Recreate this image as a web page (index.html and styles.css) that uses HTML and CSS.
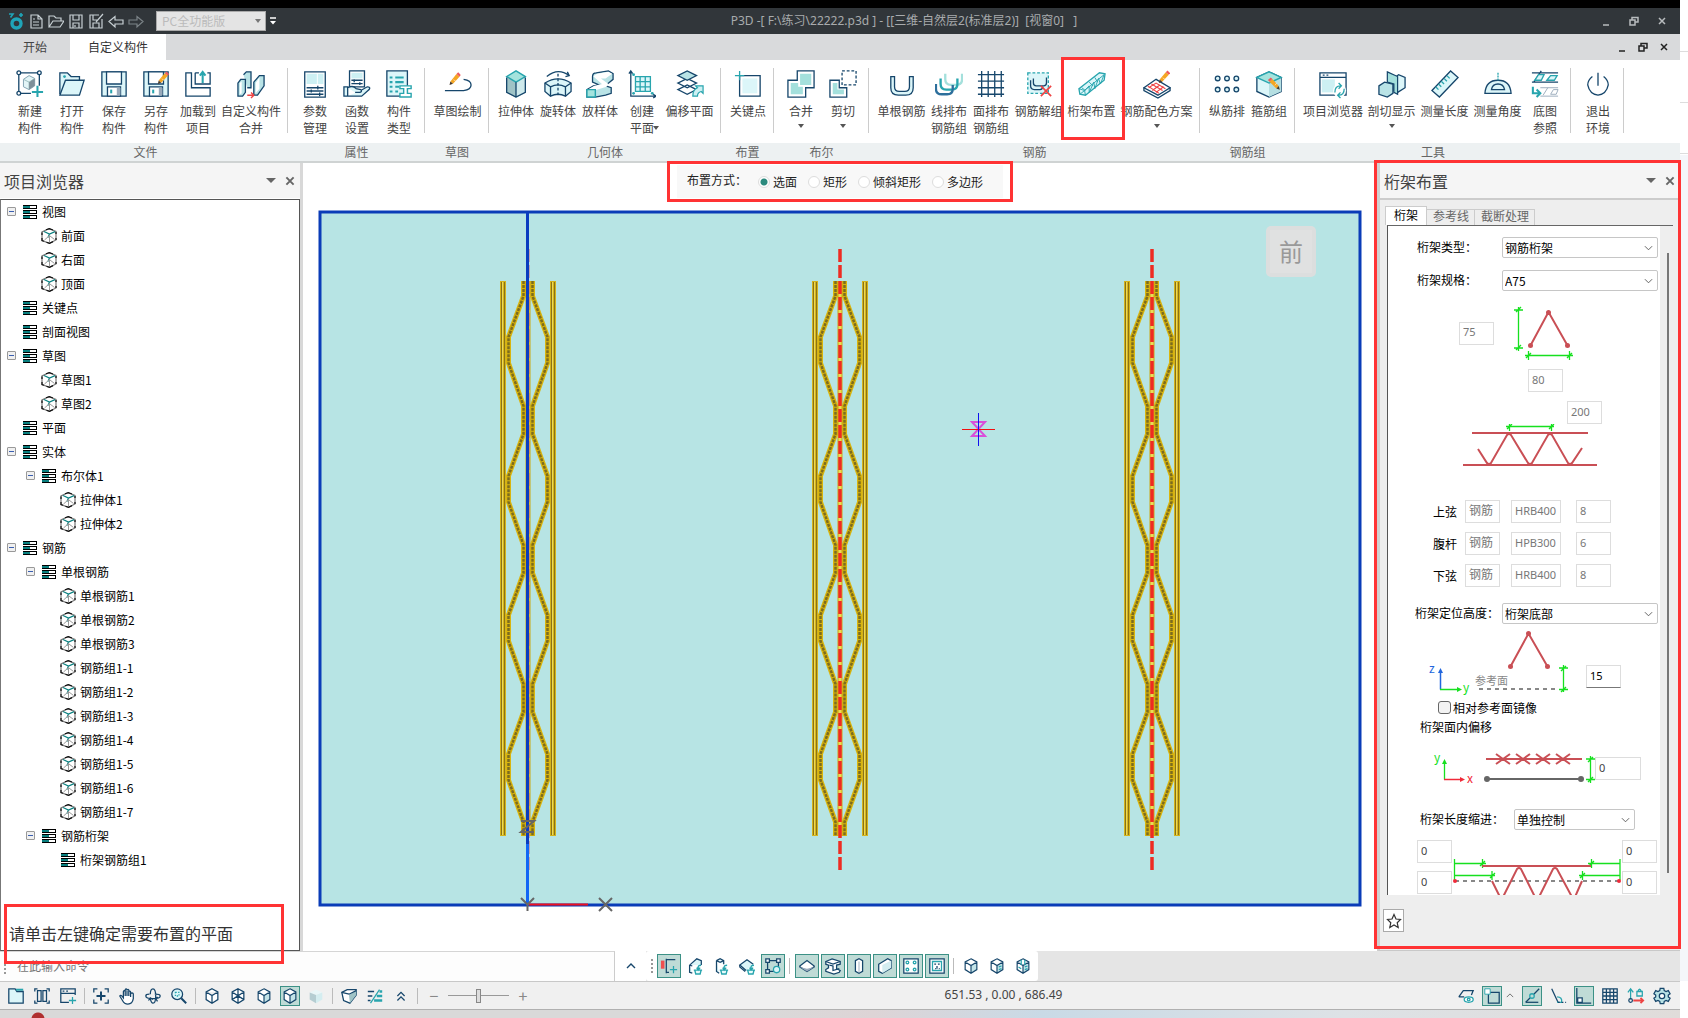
FILE: index.html
```html
<!DOCTYPE html>
<html lang="zh-CN">
<head>
<meta charset="utf-8">
<title>P3D</title>
<link rel="stylesheet" href="styles.css">
</head>
<body>
<svg class="defs" aria-hidden="true">
  <symbol id="list" viewBox="0 0 16 16"><path d="M1 1h14v4H1zM1 6h14v4H1zM1 11h14v4H1z" fill="#000"/><path d="M8 2h6v2H8zM8 7h6v2H8zM8 12h6v2H8z" fill="#fff"/><path d="M1 2h7v2H1zM1 7h7v2H1zM1 12h7v2H1z" fill="#0b8080"/></symbol>
  <symbol id="solid" viewBox="0 0 16 16"><path d="M8 .7 15 3.500V12L8.500 15.300 1 12.500V4z" fill="#fff" stroke="#777" stroke-width="1.200"/><path d="M5 1.800 8.500.7 12 2M1 4.500V7M15 4v2M15 10v2M5.500 14.200 8.500 15.300 12 13.600M1 10v2.500L3 13.200" fill="none" stroke="#111" stroke-width="1.200"/><path d="M3 3.500 8.500 6 14 3.600M8.500 6 7 9.500" fill="none" stroke="#0b8080" stroke-width="1.200"/><path d="M8.500 7v7M8 8 3.500 12M9 8l4.500 3.500" fill="none" stroke="#999"/></symbol>
  <symbol id="box" viewBox="0 0 20 20"><path d="M10 2 16.500 5.500V14L10 18 3.500 14V5.500z" fill="#fff"/><path d="M10 9.500V18l6.500-4V5.500z" fill="#c4e4e8"/><path d="M10 2 16.500 5.500V14L10 18 3.500 14V5.500zM3.500 5.500 10 9.500l6.500-4M10 9.500V18" fill="none" stroke="#16466b" stroke-width="1.300"/></symbol>
  <symbol id="pencil" viewBox="0 0 14 16"><path d="M2 11 9 2.500 12.500 5.500 5 13.500z" fill="#f5a623"/><path d="M9 2.500 11 .5 14 3.500 12.500 5.500z" fill="#ee5a5a"/><path d="M2 11 1 15 5 13.500z" fill="#4a3a2a"/><path d="M5.500 9 8.500 11" stroke="#fff" stroke-width=".6"/></symbol>
  <symbol id="bucket" viewBox="0 0 10 12"><path d="M2 7h6.500l-1 4H3zM1 7h8.500M5.500 7V4Q5.500 2 8.500 2M4 4.500 5.500 7 7.500 4.500" fill="#e8fbfb" stroke="#28a5ae" stroke-width="1.400"/></symbol>
</svg>

<div class="shell">
<div class="app">
  <header class="titlebar">
    <nav class="quick">
      <button aria-label="P3D"><svg viewBox="0 0 16 18"><circle cx="8.500" cy="11.500" r="4.500" fill="none" stroke="#1fa5b8" stroke-width="3.400"/><path d="M1 2h4L2.500 5.500M11 3h4M13 1v4" stroke="#1fa5b8" stroke-width="1.600" fill="none"/></svg></button>
      <button aria-label="新建"><svg viewBox="0 0 16 18"><path d="M3 3h7l4 4v9H3zM10 3v4h4M5 10h6M5 13h6M5 7h2" class="q"/></svg></button>
      <button aria-label="打开"><svg viewBox="0 0 16 18"><path d="M1 15V4h5l2 2h5v3M1 15l4-6h11l-4 6z" class="q"/></svg></button>
      <button aria-label="保存"><svg viewBox="0 0 16 18"><path d="M2 3h12v13H2zM5 3v5h6V3M5 16v-5h6v5M7 13v2" class="q"/></svg></button>
      <button aria-label="另存"><svg viewBox="0 0 16 18"><path d="M11 3H2v13h12V7M5 3v5h4M5 16v-5h6v5M15 2 8 10" class="q"/></svg></button>
      <button aria-label="撤销"><svg viewBox="0 0 16 18"><path d="M1 9.500 7 4.500V8h8v4H7v3z" class="q"/></svg></button>
      <button aria-label="重做"><svg viewBox="0 0 16 18"><path d="M15 9.500 9 4.500V8H1v4h8v3z" class="q dim"/></svg></button>
    </nav>
    <div class="pick edition"><select aria-label="版本"><option>PC全功能版</option></select><svg viewBox="0 0 6 4"><path d="M0 0h6L3 4z" fill="#777"/></svg></div>
    <button class="more" aria-label="更多"><svg viewBox="0 0 8 8"><path d="M1 1h6" stroke="#fff" stroke-width="1.500"/><path d="M1 4h6L4 7.500z" fill="#fff"/></svg></button>
    <h1>P3D -[ F:\练习\22222.p3d ] - [[三维-自然层2(标准层2)]  [视窗0]   ]</h1>
    <div class="wins light"><button aria-label="最小化"><svg viewBox="0 0 10 10"><path d="M2 9h6" /></svg></button><button aria-label="还原"><svg viewBox="0 0 10 10"><path d="M1 4h5v5H1zM3 4V1.500h6V6H6" /></svg></button><button aria-label="关闭"><svg viewBox="0 0 10 10"><path d="M2 2l6 6M8 2 2 8" /></svg></button></div>
  </header>

  <div class="tabs">
    <button class="tab home">开始</button><button class="tab on">自定义构件</button>
    <div class="wins dark"><button aria-label="最小化视窗"><svg viewBox="0 0 10 10"><path d="M2 9h6" /></svg></button><button aria-label="还原视窗"><svg viewBox="0 0 10 10"><path d="M1 4h5v5H1zM3 4V1.500h6V6H6" /></svg></button><button aria-label="关闭视窗"><svg viewBox="0 0 10 10"><path d="M2 2l6 6M8 2 2 8" /></svg></button></div>
  </div>

  <div class="ribbon">
    <section class="group"><div class="tools">
      <button><svg viewBox="0 0 30 30"><path d="M8 10 14 6l6 3v8l-6 4-6-3z" fill="#e3f5f7" stroke="#7d9fae"/><path d="M8 10l6 3 6-4M14 13v8" fill="none" stroke="#9bb"/><path d="M14 13l6-4v8l-6 4z" fill="#7d8f99"/><path d="M5 3h18M3 5v18M25 5v12M5 25h11" class="n"/><g class="n w"><circle cx="3" cy="3" r="2"/><circle cx="25" cy="3" r="2"/><circle cx="3" cy="25" r="2"/></g><path d="M23 17v12M17 23.500h12" class="t b"/></svg>新建<br>构件</button>
      <button><svg viewBox="0 0 30 30"><path d="M2 26V3h8l4 4h9v5" class="n l"/><path d="M2 27 8 11h20l-5 16z" class="n l"/><circle cx="7" cy="7" r="1.500" fill="#28a5ae"/></svg>打开<br>构件</button>
      <button><svg viewBox="0 0 30 30"><path d="M2 2h26v26H2z" class="n l"/><path d="M7 2h16v13H7z" class="n w"/><path d="M8 28V18h14v10z" class="n w"/><path d="M18 19h4v8h-4z" fill="#9ab"/><path d="M12 21v4" class="t b"/></svg>保存<br>构件</button>
      <button><svg viewBox="0 0 30 30"><path d="M2 2h26v26H2z" class="n l"/><path d="M7 2h16v13H7z" class="n w"/><path d="M8 28V18h14v10z" class="n w"/><path d="M18 19h4v8h-4z" fill="#9ab"/><path d="M12 21v4" class="t b"/><use href="#pencil" x="16" y="1" width="13" height="15"/></svg>另存<br>构件</button>
      <button><svg viewBox="0 0 30 30"><path d="M2 3h6v16h20v9H2zM12 3h4M12 3v12h16V3h-3" class="n w"/><path d="M20 14V4M17 6l3-4 3 4" class="t b"/></svg>加载到<br>项目</button>
      <button class="w64"><svg viewBox="0 0 30 30"><path d="M7 5l3-3h5v17h-4M1 14l3-4h5v14l-3 4H1zM18 13l6-7h5v11l-7 10h-4z" class="n m"/><path d="M3 14l2-2v13l-2 1zM20 14l4-6v12l-4 5z" fill="#fff"/><path d="M11 27h7M15 24l3 3-3 3" stroke="#ee4444" fill="none" stroke-width="1.500"/></svg>自定义构件<br>合并</button>
    </div><h2>文件</h2></section>

    <section class="group"><div class="tools">
      <button><svg viewBox="0 0 30 30"><path d="M4 2h22v27H4z" class="n w"/><path d="M6 4h11v11H6zM18 4h6v11h-6z" fill="#cdf0f3"/><path d="M6 19h18M6 22.500h18M6 26h18M18 17v4M11 21v3M20 24v4" class="n"/></svg>参数<br>管理</button>
      <button><svg viewBox="0 0 30 30"><path d="M7 1h16v17H7z" class="n w"/><path d="M9 3h12v6H9z" fill="#cdf0f3"/><path d="M9 11h12M9 14.500h12M12 10v3M18 13v3" class="n"/><path d="M1 18h4v10H1zM5 19q6-3 9 1l5 1q2 2-1 3h-5M19 22l7-4q4 0 2 3l-8 7H5" class="n l"/></svg>函数<br>设置</button>
      <button><svg viewBox="0 0 30 30"><path d="M2 1h22v27H2z" class="n l"/><path d="M5 8h3M11 8h9M5 13h3M11 13h9M5 18h3M11 18h4M5 23h3M11 23h3" class="t b"/><path d="M16 17h12v3h-4v5h4v4H16v-4h4v-5h-4z" fill="#fff" stroke="#28a5ae" stroke-width="1.500"/></svg>构件<br>类型</button>
    </div><h2>属性</h2></section>

    <section class="group"><div class="tools">
      <button class="w53"><svg viewBox="0 0 30 30"><use href="#pencil" x="5" y="2" width="13" height="15"/><path d="M1 22h20q8-1 8-6 0-5-8-6" class="n"/></svg>草图绘制</button>
    </div><h2>草图</h2></section>

    <section class="group"><div class="tools">
      <button><svg viewBox="0 0 30 30"><path d="M5 7 15 1l10 6v17l-10 6-10-6z" fill="#9fc3c6"/><path d="M15 13 25 7v17l-10 6z" fill="#cfeaec"/><path d="M5 7 15 1l10 6-10 6z" fill="#a4e3dd" stroke="#28a5ae" stroke-width="1.500"/><path d="M5 8v16l10 5 10-5V8M15 13v16" class="n"/></svg>拉伸体</button>
      <button><svg viewBox="0 0 30 30"><path d="M3 7Q15-3 27 6M25 2l2 4-4 1" class="n"/><path d="M1 14q14-9 28 0v9l-6 5q-8-4-16 0l-6-5z" class="n l"/><path d="M1 14l6 4q8-4 16 0l6-4M7 18v10M23 18v10" class="n"/><path d="M15 4v24" class="n" stroke-dasharray="3 2"/></svg>旋转体</button>
      <button><svg viewBox="0 0 30 30"><path d="M7 7Q7 3 11 3L24 1l5 3v6l-6 5-5 1 9 3v6l-6 2-11 2H1v-8l7-4 6-1-7-3z" class="n m"/><path d="M8 7q1-2 4-3l12-2 4 2-7 5h-5l8 6-2 3-13 4-7-1 7-4 8-2z" fill="#fff"/><path d="M1 21h9v8H1z" fill="#a4e3dd" stroke="#28a5ae" stroke-width="1.500"/></svg>放样体</button>
      <button><svg viewBox="0 0 30 30"><path d="M8 7h16v16H8z" fill="#dcf6f9"/><path d="M8 7h16v16H8zM13 7v16M18.500 7v16M8 12.500h16M8 18h16" class="t"/><path d="M3 1v27h27M1 4l2-3 2 3M27 26l3 2-3 2" class="n"/><g fill="#28a5ae"><circle cx="6" cy="5" r="1.500"/><circle cx="6" cy="25" r="1.500"/><circle cx="26" cy="25" r="1.500"/></g></svg>创建<br>平面<i class="caret beside"></i></button>
      <button class="w53"><svg viewBox="0 0 30 30"><path d="M2 21l10-5 10 5-10 5zM2 14l10-5 10 5-10 5z" class="n w"/><path d="M2 6 12 1l10 5-10 5z" class="n m"/><path d="M18 28q0-7 5-9l-2-2h8v8l-2-2q-4 1-4 5z" fill="#cdf0f3" stroke="#28a5ae" stroke-width="1.300"/></svg>偏移平面</button>
    </div><h2>几何体</h2></section>

    <section class="group"><div class="tools">
      <button><svg viewBox="0 0 30 30"><path d="M6 6h22v22H6z" class="n w"/><path d="M9 9h16v16H9z" fill="#dcf6f9"/><path d="M6 1v10M1 6h10" class="t"/></svg>关键点</button>
    </div><h2>布置</h2></section>

    <section class="group"><div class="tools">
      <button><svg viewBox="0 0 30 30"><path d="M11 1h18v18H20v10H1V11h10z" class="n w"/><path d="M14 4h12v12H14zM4 14h8v4h5v8H4z" fill="#a4e0dc"/></svg>合并<i class="caret"></i></button>
      <button><svg viewBox="0 0 30 30"><path d="M14 1h15v15H14z" class="n" stroke-dasharray="3 2"/><path d="M1 11h10v8h8v10H1z" class="n w"/><path d="M4 14h5v7h7v5H4z" fill="#a4e0dc"/></svg>剪切<i class="caret"></i></button>
    </div><h2>布尔</h2></section>

    <section class="group"><div class="tools">
      <button class="w53"><svg viewBox="0 0 30 30"><path d="M3 7h4v11q0 5 5 5h6q5 0 5-5V7h4v12q0 8-8 8h-8q-8 0-8-8z" class="n l"/></svg>单根钢筋</button>
      <button><svg viewBox="0 0 30 30"><g fill="none" stroke-width="2.500"><path d="M11 4v6q0 6 6 6h6q6 0 6-6V4" stroke="#a4e0dc"/><path d="M6 9v6q0 6 6 6h6q6 0 6-6V9" stroke="#28a5ae"/><path d="M1 15v5q0 6 6 6h6q6 0 6-6v-4" stroke="#2d6f9c"/></g></svg>线排布<br>钢筋组</button>
      <button><svg viewBox="0 0 30 30"><path d="M5 1v28M12 1v28M19 1v28M26 1v28M1 5h28M1 12h28M1 19h28M1 26h28" class="n"/></svg>面排布<br>钢筋组</button>
      <button class="w53"><svg viewBox="0 0 30 30"><path d="M3 3h22v22H3z" class="t l" stroke-dasharray="3 2"/><path d="M9 9v5q0 3 3 3h8q3 0 3-3V8M6 11v6q0 4 4 4h6q3 0 3-3" class="n"/><path d="M17 17 28 28M28 17 17 28" stroke="#ee4444" stroke-width="1.800"/></svg>钢筋解组</button>
      <button class="w53"><svg viewBox="0 0 30 30"><path d="M1 20 23 3l6 1-1 7L8 27l-6-1z" class="t l"/><path d="M1 20l6 2 1 5M7 22 28 5M2 26 7 22l5-5 0 7 5-11 1 7 4-11 2 6 4-10M4 19l4 3M12 13l4 4M18 8l3 5" class="t w0"/></svg>桁架布置</button>
      <button class="w76"><svg viewBox="0 0 30 30"><path d="M1 19 14 10l15 9-13 8z" class="n w"/><path d="M1 19v3l15 8 13-8v-3" class="n"/><path d="M6 19l8-5 10 6M10 22l8-6M14 24l8-6M5 17l12 8M9 15l12 7" stroke="#ee4444" fill="none" stroke-width="1.200"/><use href="#pencil" x="16" y="0" width="13" height="15"/></svg>钢筋配色方案<i class="caret"></i></button>
    </div><h2>钢筋</h2></section>

    <section class="group"><div class="tools">
      <button><svg viewBox="0 0 30 30"><g class="n l"><circle cx="5" cy="9" r="2.500"/><circle cx="15" cy="9" r="2.500"/><circle cx="25" cy="9" r="2.500"/><circle cx="5" cy="21" r="2.500"/><circle cx="15" cy="21" r="2.500"/><circle cx="25" cy="21" r="2.500"/></g></svg>纵筋排</button>
      <button><svg viewBox="0 0 30 30"><path d="M2 8 15 2l13 6v15l-13 6-13-6z" class="n l"/><path d="M15 14l13-6v15l-13 6z" fill="#b5dfe2"/><path d="M2 8 15 2l13 6-13 6z" fill="#a4e3dd" stroke="#28a5ae" stroke-width="1.500"/><use href="#pencil" x="14" y="7" width="14" height="15" transform="rotate(-85 21 15)"/></svg>箍筋组</button>
    </div><h2>钢筋组</h2></section>

    <section class="group"><div class="tools">
      <button class="w64"><svg viewBox="0 0 30 30"><path d="M1 3h28v24H1zM1 8h28" class="n w"/><path d="M3 10h14v14H3z" fill="#cdf0f3"/><path d="M4 5.500h2M8 5.500h2" class="n"/><circle cx="22" cy="22" r="7" fill="#fff"/><path d="M17 24q0-7 6-7M27 20q0 7-6 7M21 14l3 3-3 3M23 24l-3 3 3 3" class="t"/></svg>项目浏览器</button>
      <button class="w53"><svg viewBox="0 0 30 30"><path d="M1 17l6-4 9 2v10l-6 4-9-3z" class="n m"/><path d="M17 9l5-4 7 3v11l-8 5-4-2z" class="n l"/><path d="M10 2l11 5v19l-4-2V15l-7-2z" fill="#a4e0dc" stroke="#16466b" stroke-width="1.300"/></svg>剖切显示<i class="caret"></i></button>
      <button class="w53"><svg viewBox="0 0 30 30"><path d="M1 22 21 1l8 7L9 29z" class="n l"/><path d="M5 18l3 3M8 15l3 3M11 12l3 3M14 9l3 3M17 6l3 3" class="t"/></svg>测量长度</button>
      <button class="w53"><svg viewBox="0 0 30 30"><path d="M1 25q1-14 14-14t14 14zM8 21q1-6 7-6t7 6z" class="n l"/><path d="M15 3v8" class="t" stroke-dasharray="2 1"/></svg>测量角度</button>
      <button><svg viewBox="0 0 30 30"><path d="M1 3h28M1 13h28M3 13 11 1" class="n"/><path d="M4 11l4-6h6l-3 6zM17 11l4-5h7l-3 5z" class="t l"/><path d="M10 19h19M10 28h19M13 27l5-8M21 26l3-5h5l-2 5z" stroke="#9ab" fill="none"/><path d="M2 18v7h7M6 21l4 4-4 4" class="t b"/></svg>底图<br>参照</button>
    </div><h2>工具</h2></section>

    <section class="group"><div class="tools">
      <button><svg viewBox="0 0 30 30"><path d="M9 7q-5 4-5 9 2 10 11 11 9-1 11-11 0-5-5-9M15 3v14" class="n"/></svg>退出<br>环境</button>
    </div><h2></h2></section>
    <section class="group rest"><h2></h2></section>
  </div>

  <main class="work">
    <aside class="browser">
      <div class="head"><h3>项目浏览器</h3><i class="caret big"></i><button aria-label="关闭浏览器"><svg viewBox="0 0 10 10"><path d="M2 2l6 6M8 2 2 8"/></svg></button></div>
      <ul class="tree">
        <li><b></b><svg><use href="#list"/></svg>视图</li>
        <li class="l1"><s></s><svg><use href="#solid"/></svg>前面</li>
        <li class="l1"><s></s><svg><use href="#solid"/></svg>右面</li>
        <li class="l1"><s></s><svg><use href="#solid"/></svg>顶面</li>
        <li><s></s><svg><use href="#list"/></svg>关键点</li>
        <li><s></s><svg><use href="#list"/></svg>剖面视图</li>
        <li><b></b><svg><use href="#list"/></svg>草图</li>
        <li class="l1"><s></s><svg><use href="#solid"/></svg>草图1</li>
        <li class="l1"><s></s><svg><use href="#solid"/></svg>草图2</li>
        <li><s></s><svg><use href="#list"/></svg>平面</li>
        <li><b></b><svg><use href="#list"/></svg>实体</li>
        <li class="l1"><b></b><svg><use href="#list"/></svg>布尔体1</li>
        <li class="l2"><s></s><svg><use href="#solid"/></svg>拉伸体1</li>
        <li class="l2"><s></s><svg><use href="#solid"/></svg>拉伸体2</li>
        <li><b></b><svg><use href="#list"/></svg>钢筋</li>
        <li class="l1"><b></b><svg><use href="#list"/></svg>单根钢筋</li>
        <li class="l2"><s></s><svg><use href="#solid"/></svg>单根钢筋1</li>
        <li class="l2"><s></s><svg><use href="#solid"/></svg>单根钢筋2</li>
        <li class="l2"><s></s><svg><use href="#solid"/></svg>单根钢筋3</li>
        <li class="l2"><s></s><svg><use href="#solid"/></svg>钢筋组1-1</li>
        <li class="l2"><s></s><svg><use href="#solid"/></svg>钢筋组1-2</li>
        <li class="l2"><s></s><svg><use href="#solid"/></svg>钢筋组1-3</li>
        <li class="l2"><s></s><svg><use href="#solid"/></svg>钢筋组1-4</li>
        <li class="l2"><s></s><svg><use href="#solid"/></svg>钢筋组1-5</li>
        <li class="l2"><s></s><svg><use href="#solid"/></svg>钢筋组1-6</li>
        <li class="l2"><s></s><svg><use href="#solid"/></svg>钢筋组1-7</li>
        <li class="l1"><b></b><svg><use href="#list"/></svg>钢筋桁架</li>
        <li class="l2"><s></s><svg><use href="#list"/></svg>桁架钢筋组1</li>
      </ul>
      <p class="hint">请单击左键确定需要布置的平面</p>
    </aside>

    <section class="canvas">
      <svg viewBox="303 163 1074 788" class="scene">
        <defs>
          <path id="webline" d="M523.500 281v15L508.500 337v26L523.500 406v28L508.500 476v26L523.500 545v28L508.500 615v26L523.500 684v28L508.500 754v26L523.500 822v14M532.500 281v15L547.500 337v26L532.500 406v28L547.500 476v26L532.500 545v28L547.500 615v26L532.500 684v28L547.500 754v26L532.500 822v14"/>
          <g id="truss" fill="none">
            <path d="M503 281v555M553 281v555" stroke="#d4b31c" stroke-width="6"/>
            <path d="M502 282v553M552 282v553" stroke="#ecd958" stroke-width="2"/>
            <path d="M504.500 282v553M554.500 282v553M501.500 282v553M551.500 282v553" stroke="#8a7318" stroke-width="1"/>
            <use href="#webline" stroke="#d9b50e" stroke-width="5"/>
            <use href="#webline" stroke="#7c6c1f" stroke-width="2.500" stroke-dasharray="3 1"/>
            <path d="M528 281v555" stroke="#c9a810" stroke-width="5"/>
            <path d="M528 281v555" stroke="#ecd958" stroke-width="3"/>
          </g>
        </defs>
        <path d="M320 212H1360V905H320z" fill="#b7e4e4" stroke="#0a3cb8" stroke-width="3"/>
        <use href="#truss"/><use href="#truss" x="312"/><use href="#truss" x="624"/>
        <path d="M840 249v622M1152 249v622" stroke="#ee2b22" stroke-width="3.500" stroke-dasharray="13 3"/>
        <path d="M529 249v622" stroke="#c86a7a" stroke-width="1" stroke-dasharray="13 3"/>
        <path d="M527.500 212v632" stroke="#0a3cc0" stroke-width="3"/><path d="M527.500 844v61" stroke="#1266f5" stroke-width="3"/>
        <path d="M529 904.500h59" stroke="#f01020" stroke-width="2"/>
        <path d="M599 898l13 13M612 898l-13 13M521 898l6.500 6.500 6.500-6.500M527.500 904v7M521 821h13l-13 11h13" stroke="#666" stroke-width="2" fill="none"/>
        <path d="M972 422h13l-13 14h13z" fill="none" stroke="#d94fd9" stroke-width="2"/>
        <path d="M962 429.500h33" stroke="#f01010" stroke-width="1"/><path d="M978.500 413v33" stroke="#1010f0" stroke-width="1"/>
        <rect x="1266" y="226" width="50" height="51" rx="5" fill="#dcdede"/><rect x="1270" y="230" width="42" height="43" fill="#e0e1e1"/>
        <text x="1291" y="261" class="cube">前</text>
      </svg>
      <fieldset class="modes">
        <legend>布置方式：</legend><span>布置方式：</span>
        <label><input type="radio" name="m" checked>选面</label><label><input type="radio" name="m">矩形</label><label><input type="radio" name="m">倾斜矩形</label><label><input type="radio" name="m">多边形</label>
      </fieldset>
    </section>

    <aside class="props">
      <div class="head"><h3>桁架布置</h3><i class="caret big"></i><button aria-label="关闭面板"><svg viewBox="0 0 10 10"><path d="M2 2l6 6M8 2 2 8"/></svg></button></div>
      <div class="ptabs"><button class="on">桁架</button><button>参考线</button><button>截断处理</button></div>
      <div class="scroller">
        <form class="form">
          <div class="line r1"><label for="kind">桁架类型：</label><div class="pick"><select id="kind"><option>钢筋桁架</option></select><svg viewBox="0 0 10 6"><path d="M1 1l4 4 4-4"/></svg></div></div>
          <div class="line r1"><label for="spec">桁架规格：</label><div class="pick"><select id="spec"><option>A75</option></select><svg viewBox="0 0 10 6"><path d="M1 1l4 4 4-4"/></svg></div></div>
          <div class="line tri"><input class="f" value="75" readonly aria-label="高度">
            <svg width="66" height="60" viewBox="1510 303 66 60"><g class="g"><path d="M1518.500 307v44M1514 310h9M1514 348h9M1516 312l5-5M1516 350l5-5M1525 355.500h48M1528.500 351v9M1569.500 351v9M1526 358l5-5M1567 358l5-5"/></g><path d="M1530.500 345.500 1548.500 312l19 33.500" class="rd"/><g fill="#c94f55"><circle cx="1530.500" cy="345.500" r="2.500"/><circle cx="1548.500" cy="312.500" r="2.500"/><circle cx="1567.500" cy="345.500" r="2.500"/></g></svg></div>
          <div class="line in80"><input class="f" value="80" readonly aria-label="宽度"></div>
          <div class="line in200"><input class="f" value="200" readonly aria-label="间距"></div>
          <div class="line elevation"><svg width="140" height="46" viewBox="1460 424 140 46"><g class="g"><path d="M1506 426.500h48M1509.500 422v9M1551.500 422v9M1507 429l5-5M1549 429l5-5"/></g><path d="M1472 433h116M1463 465h134" class="rd"/><path d="M1478 449l9 14q2 2 4 0l16-28q2-2 4 0l17 28q2 2 4 0l16-28q2-2 4 0l16 28q2 2 4 0l10-15" class="rd"/></svg></div>
          <div class="bars">
            <span>上弦</span><input class="f cn" value="钢筋" readonly aria-label="上弦类别"><input class="f" value="HRB400" readonly aria-label="上弦牌号"><input class="f" value="8" readonly aria-label="上弦直径">
            <span>腹杆</span><input class="f cn" value="钢筋" readonly aria-label="腹杆类别"><input class="f" value="HPB300" readonly aria-label="腹杆牌号"><input class="f" value="6" readonly aria-label="腹杆直径">
            <span>下弦</span><input class="f cn" value="钢筋" readonly aria-label="下弦类别"><input class="f" value="HRB400" readonly aria-label="下弦牌号"><input class="f" value="8" readonly aria-label="下弦直径">
          </div>
          <div class="line r1 pos"><label for="level">桁架定位高度：</label><div class="pick"><select id="level"><option>桁架底部</option></select><svg viewBox="0 0 10 6"><path d="M1 1l4 4 4-4"/></svg></div></div>
          <div class="line ref"><svg width="150" height="70" viewBox="1425 628 150 70"><path d="M1510.500 666.500 1528.500 633.500l19 33" class="rd"/><g fill="#c94f55"><circle cx="1510.500" cy="666.500" r="2.500"/><circle cx="1528.500" cy="633.500" r="2.500"/><circle cx="1547.500" cy="666.500" r="2.500"/></g><path d="M1440.500 689.500V671" stroke="#2266dd" stroke-width="1.500"/><path d="M1438 673l2.500-5 2.500 5z" fill="#2266dd"/><path d="M1440 689.500h18" stroke="#16e01f" stroke-width="1.500"/><path d="M1457 687l5 2.500-5 2.500z" fill="#16e01f"/><text x="1429" y="673" fill="#2266dd">z</text><text x="1463" y="692" fill="#16e01f">y</text><text x="1475" y="685" class="rf">参考面</text><path d="M1479 689h77" stroke="#888" stroke-width="2" stroke-dasharray="4 4"/><path d="M1563.500 665v27M1559 668h9M1559 689.500h9M1561 671l5-5M1561 692l5-5" class="g"/></svg><input class="f edit" value="15" aria-label="定位高度值"></div>
          <label class="line mirror"><input type="checkbox">相对参考面镜像</label>
          <div class="line offt">桁架面内偏移</div>
          <div class="line off"><svg width="170" height="40" viewBox="1425 749 170 40"><path d="M1444.500 779.500V762M1590.500 756v27M1586 759h9M1586 779.500h9M1588 762l5-5M1588 782l5-5" class="g"/><path d="M1442 764l2.500-5 2.500 5z" fill="#16e01f"/><path d="M1444 779.500h17" stroke="#f02a3a" stroke-width="1.500"/><path d="M1460 777l5 2.500-5 2.500z" fill="#f02a3a"/><text x="1434" y="762" fill="#16e01f">y</text><text x="1467" y="783" fill="#f02a3a">x</text><path d="M1486 759h96M1496 754l14 10M1510 754l-14 10M1516 754l14 10M1530 754l-14 10M1536 754l14 10M1550 754l-14 10M1556 754l14 10M1570 754l-14 10" class="rd"/><path d="M1487 779h94" stroke="#666" stroke-width="2"/><circle cx="1487" cy="779" r="3" fill="#666"/><circle cx="1581" cy="779" r="3" fill="#666"/></svg><input class="f dark" value="0" aria-label="偏移"></div>
          <div class="line len"><label for="inset">桁架长度缩进：</label><div class="pick"><select id="inset"><option>单独控制</option></select><svg viewBox="0 0 10 6"><path d="M1 1l4 4 4-4"/></svg></div></div>
          <div class="ends"><div><input class="f dark" value="0" aria-label="左上"><input class="f dark" value="0" aria-label="左下"></div>
            <svg width="170" height="55" viewBox="1452 840 170 55"><path d="M1455 881h164" stroke="#888" stroke-width="2" stroke-dasharray="4 4"/><path d="M1454 863.500h32M1588 863.500h32M1454 875.500h41M1579 875.500h41M1454.500 859v21M1482.500 859v9M1591.500 859v9M1620 859v21M1492 871v9M1582.500 871v9M1480 866l5-5M1589 866l5-5M1490 878l5-5M1580 878l5-5" class="g"/><path d="M1482 866h109M1492 881l8 16M1503 897l14-28q2-2 4 0l14 28M1539 897l14-28q2-2 4 0l15 28M1575 897l7-16" class="rd"/><circle cx="1455" cy="881" r="2" fill="#f02a3a"/><circle cx="1619" cy="881" r="2" fill="#f02a3a"/></svg>
            <div><input class="f dark" value="0" aria-label="右上"><input class="f dark" value="0" aria-label="右下"></div></div>
        </form>
        <div class="thumb"></div>
      </div>
      <button class="star" aria-label="收藏"><svg viewBox="0 0 16 16"><path d="M8 1.500l2 4.500 4.500.5-3.300 3.200 1 4.800L8 12l-4.200 2.500 1-4.800L1.500 6.500 6 6z" fill="none" stroke="#333" stroke-width="1.200"/></svg></button>
    </aside>
  </main>

  <div class="command">
    <div class="entry"><i class="grip"></i><input placeholder="在此输入命令" aria-label="命令"></div>
    <button class="up" aria-label="展开"><svg viewBox="0 0 10 6"><path d="M1 5l4-4 4 4" class="n"/></svg></button>
    <div class="strip">
      <i class="grip"></i>
      <button class="a" aria-label="轴网"><svg viewBox="0 0 20 20"><path d="M1 4h4v9H1z" fill="#f05050"/><path d="M7 2v16M7 3h10M7 17h3" class="n"/><path d="M15 10v8M11 14h8" class="t"/></svg></button>
      <button aria-label="面一"><svg viewBox="0 0 20 20"><path d="M4 9 12 2l5 2v5M4 9v8l3 1M4 9l3 1" class="n l"/><use href="#bucket" x="7" y="7" width="12" height="13"/></svg></button>
      <button aria-label="面二"><svg viewBox="0 0 20 20"><path d="M5 4l4-2 4 2v4M5 4v12l3 2M5 4l4 2 4-2" class="n l"/><use href="#bucket" x="7" y="7" width="12" height="13"/></svg></button>
      <button aria-label="面三"><svg viewBox="0 0 20 20"><path d="M17 8 10 3 2 9l7 6" class="n l"/><path d="M2 9v2l6 5" class="n"/><use href="#bucket" x="8" y="7" width="12" height="13"/></svg></button>
      <button class="a" aria-label="面选"><svg viewBox="0 0 20 20"><path d="M4 4h12v12H4z" class="n"/><path d="M2 2h4v4H2zM14 2h4v4h-4zM2 14h4v4H2z" class="n w"/><circle cx="14" cy="14" r="3.500" class="t l"/></svg></button>
      <i class="sep"></i>
      <button class="a" aria-label="板"><svg viewBox="0 0 20 20"><path d="M2 10 10 4l8 6v1l-8 5-8-5z" class="n w"/><path d="M2 11l8 5 8-5-8 2z" fill="#9ab"/></svg></button>
      <button class="a" aria-label="梁"><svg viewBox="0 0 20 20"><path d="M2 5 9 2l9 3v3l-4 1v4l4 2-1 2-6 2-9-3v-2l3-2V9L2 8z" class="n w"/><path d="M2 5l8 3 8-3M6 9l4 1v5l7-2" class="n"/></svg></button>
      <button class="a" aria-label="柱"><svg viewBox="0 0 20 20"><path d="M6 4l4-2 4 2v12l-4 2-4-2z" class="n w"/><path d="M10 5v12" stroke="#9ab"/></svg></button>
      <button class="a" aria-label="墙"><svg viewBox="0 0 20 20"><path d="M3 8 13 2l4 2v8L7 18l-4-2z" class="n w"/><path d="M7 9 17 4v8L7 18z" fill="#d4edf0"/></svg></button>
      <button class="a" aria-label="孔"><svg viewBox="0 0 20 20"><path d="M2 2h16v16H2z" class="n w"/><g class="t"><circle cx="6" cy="6" r="1.500"/><circle cx="14" cy="6" r="1.500"/><circle cx="6" cy="14" r="1.500"/><circle cx="14" cy="14" r="1.500"/></g></svg></button>
      <button class="a" aria-label="插座"><svg viewBox="0 0 20 20"><path d="M2 2h16v16H2z" class="n w"/><path d="M5 5h10v10H5z" class="t"/><path d="M7 8h2M11 8h2M10 10v3M8 13h1M12 13h1" class="n"/></svg></button>
      <i class="sep"></i>
      <button aria-label="视图一"><svg><use href="#box"/></svg></button>
      <button aria-label="视图二"><svg viewBox="0 0 20 20"><use href="#box"/><path d="M12 11l3-1M12 14l3-1" class="t"/></svg></button>
      <button aria-label="视图三"><svg viewBox="0 0 20 20"><use href="#box"/><path d="M12 11l3-1M12 14l3-1M8 3v6M12 3v6M5 11l3 2" class="t"/></svg></button>
    </div>
  </div>

  <footer class="status">
    <button aria-label="文件夹"><svg viewBox="0 0 20 20"><path d="M2 2h7l2 3h7v13H2z" class="n l"/><path d="M10 3h8" class="t b"/></svg></button>
    <button aria-label="排列"><svg viewBox="0 0 20 20"><path d="M5 2H2v3M2 15v3h3M15 2h3v3M18 15v3h-3M5 4h4v12H5zM11 4h4v12h-4z" class="n"/></svg></button>
    <button aria-label="新窗口"><svg viewBox="0 0 20 20"><path d="M18 9V2H2v15h9M2 7h16M4 4.500h2M8 4.500h2" class="n"/><path d="M15 11v8M11 15h8" class="t"/></svg></button>
    <i class="sep"></i>
    <button aria-label="全图"><svg viewBox="0 0 20 20"><path d="M6 2H2v4M2 14v4h4M14 2h4v4M18 14v4h-4" class="n"/><path d="M10 5v10M5 10h10" class="n b"/></svg></button>
    <button aria-label="平移"><svg viewBox="0 0 20 20"><path d="M6 11V5q1-2 2 0V3q1-2 2 0v0q2-1 2 1v1q2-1 2 1v1q3-1 3 1v5q-1 6-6 6-4 0-6-4l-3-5q1-2 4 2zM8 5v5M10 4v6M12 5v5M14 7v4" class="n w"/></svg></button>
    <button aria-label="旋转"><svg viewBox="0 0 20 20"><path d="M7 8Q7 2 10 2q3 0 3 8 0 8-3 8-2 0-3-5M12 8q6 0 6 2 0 3-8 3-8 0-8-3 0-2 4-2M5 15l2-3 3 2M15 11l-2 2 2 3" class="n"/></svg></button>
    <button aria-label="缩放"><svg viewBox="0 0 20 20"><circle cx="8" cy="8" r="6" class="n l"/><path d="M12.500 12.500 18 18" class="n b"/><path d="M6 6h4v4H6z" class="t" stroke-dasharray="1.500 1.500"/></svg></button>
    <i class="sep"></i>
    <button aria-label="消隐"><svg viewBox="0 0 20 20"><path d="M10 2 16.500 5.500V14L10 18 3.500 14V5.500zM3.500 5.500 10 9.500l6.500-4M10 9.500V18" class="n w"/></svg></button>
    <button aria-label="线框"><svg viewBox="0 0 20 20"><path d="M10 2 16.500 5.500V14L10 18 3.500 14V5.500zM3.500 5.500 16.500 14M16.500 5.500 3.500 14M10 2V18" class="n w"/></svg></button>
    <button aria-label="着色"><svg><use href="#box"/></svg></button>
    <button class="a" aria-label="真实"><svg><use href="#box"/></svg></button>
    <button aria-label="无边"><svg viewBox="0 0 20 20"><path d="M3 6l7-3 7 3-7 3z" fill="#e8f6f8"/><path d="M3 6l7 3v9l-7-4z" fill="#b5cdd2"/><path d="M17 6l-7 3v9l7-4z" fill="#d4edf0"/></svg></button>
    <i class="sep"></i>
    <button aria-label="裁剪"><svg viewBox="0 0 20 20"><path d="M2 6l6-3h10v6l-7 9-7-3z" class="n w"/><path d="M10 9l8-5v5l-7 9z" fill="#9fc3c6"/><path d="M2 6l8 2 8-4" class="n"/></svg></button>
    <button aria-label="过滤"><svg viewBox="0 0 20 20"><path d="M2 5h7M2 10h5M2 15h3" class="n"/><path d="M5 18 15 3" class="t"/><path d="M15 5h3M12 10h6M9 15h9" stroke="#28a5ae" stroke-width="3"/></svg></button>
    <button aria-label="收起"><svg viewBox="0 0 20 20"><path d="M6 10l4-4 4 4M6 15l4-4 4 4" class="n"/></svg></button>
    <i class="sep"></i>
    <span class="sign">−</span><input type="range" aria-label="透明度" value="50"><span class="sign">+</span>
    <output>651.53 , 0.00 , 686.49</output>
    <div class="snaps">
      <button aria-label="显示"><svg viewBox="0 0 20 20"><path d="M2 11 7 4h11l-2 5M2 11h6" class="n"/><ellipse cx="13" cy="14" rx="5" ry="3" class="t w"/><circle cx="13" cy="14" r="1.500" class="t"/></svg></button>
      <button class="a" aria-label="捕捉"><svg viewBox="0 0 20 20"><path d="M6 6h12v12H6z" class="n"/><path d="M2 2h6v6H2z" fill="#fff" stroke="#28a5ae"/></svg></button><button class="tiny" aria-label="捕捉选项"><svg viewBox="0 0 10 6"><path d="M1 5l4-4 4 4" fill="none" stroke="#555"/></svg></button>
      <button class="a" aria-label="近点"><svg viewBox="0 0 20 20"><path d="M3 17 8 12M12 8l6-6" class="n"/><circle cx="10" cy="10" r="2.500" class="t"/><path d="M3 17h14" class="n"/></svg></button>
      <button aria-label="角度"><svg viewBox="0 0 20 20"><path d="M3 2 10 17" class="n"/><path d="M9 11q6 0 5 6H9" class="t"/><path d="M10 17h9" class="n" stroke-dasharray="2 2"/></svg></button>
      <button class="a" aria-label="正交"><svg viewBox="0 0 20 20"><path d="M2 1v17h16" class="n"/><path d="M3 12h5v5H3z" class="n w"/></svg></button>
      <button aria-label="网格"><svg viewBox="0 0 20 20"><path d="M2 2h16v16H2zM6 2v16M10 2v16M14 2v16M2 6h16M2 10h16M2 14h16" class="n"/></svg></button>
      <button aria-label="锁定"><svg viewBox="0 0 20 20"><path d="M4 14V3M1 6l3-4 3 4" class="t"/><circle cx="4" cy="15" r="2" class="n"/><path d="M7 15h11M15 12l3 3-3 3" stroke="#ee4444" stroke-width="2" fill="none"/><path d="M11 5h6v5h-6zM12 5q2-5 4 0" class="t"/></svg></button>
      <button aria-label="设置"><svg viewBox="0 0 20 20"><path d="M8 1.500h4l.5 2.500 2 1 2.500-1 2 3.500-2 1.500v2l2 1.500-2 3.500-2.500-1-2 1-.5 2.500H8l-.5-2.500-2-1-2.500 1-2-3.500L3 11V9L1 7.500 3 4l2.500 1 2-1z" class="n m"/><circle cx="10" cy="10" r="3" class="n w"/></svg></button>
    </div>
  </footer>
  <div class="desk"></div>
</div>
<div class="beyond"><i></i><i></i><i></i></div>
<div class="mark m1"></div><div class="mark m2"></div><div class="mark m3"></div><div class="mark m4"></div>
</div>
</body>
</html>
```
FILE: styles.css
```css
* { box-sizing: border-box; }
body {
  margin: 0;
  font: 12px/17px "Noto Sans CJK SC", "Noto Sans", sans-serif;
  color: #444;
  background: #fff;
}
h1, h2, h3, ul, p, fieldset { margin: 0; padding: 0; border: 0; font-weight: normal; }
button, input, select { font: inherit; color: inherit; margin: 0; padding: 0; border: 0; background: none; border-radius: 0; }
svg { display: block; flex: none; }
.defs { position: absolute; width: 0; height: 0; }

/* icon strokes and fills */
.n, .t { fill: none; stroke: #16466b; stroke-width: 1.4; }
.t { stroke: #28a5ae; }
.l { fill: #dcf6f9; }
.w { fill: #fff; }
.m { fill: #b9e3e6; }
.b { stroke-width: 2.2; }
.w0 { stroke-width: 1; }
.g { fill: none; stroke: #16e01f; stroke-width: 1.3; }
.rd { fill: none; stroke: #c94f55; stroke-width: 2; }
.rf { fill: #888; font-size: 11px; }

.shell { position: relative; display: flex; min-height: 100vh; }
.app { flex: 1; min-width: 0; display: flex; flex-direction: column; }
.beyond { width: 8px; background: linear-gradient(#fff 155px, #f4f6fa 155px, #f4f6fa 981px, #fff 981px); padding-top: 51px; }
.beyond i { display: block; height: 1px; background: #ddd; margin-bottom: 50px; }

/* title bar */
.titlebar { position: relative; height: 34px; padding: 0 13px 0 8px; border-top: 8px solid #000; background: #31363a; display: flex; align-items: center; }
.quick { display: flex; gap: 4px; }
.quick svg { width: 16px; height: 18px; }
.q { fill: none; stroke: #c8d0d4; stroke-width: 1.2; }
.dim { stroke: #7c8488; }
.pick { position: relative; }
.pick select { appearance: none; width: 100%; height: 100%; border: 1px solid #c6c6c6; border-radius: 2px; background: #fff; padding: 0 0 1px 2px; color: #000; display: block; }
.pick svg { position: absolute; right: 5px; top: 8px; width: 9px; height: 6px; fill: none; stroke: #555; pointer-events: none; }
.edition { width: 110px; height: 20px; margin-left: 12px; }
.edition select { background: #e4e4e4; border: 1px solid #aaa; border-radius: 0; color: #bbb; padding-left: 5px; }
.edition svg { width: 6px; height: 4px; stroke: none; }
.more { margin-left: 3px; }
.more svg { width: 8px; height: 8px; }
h1 { position: absolute; left: 0; right: 0; top: 4px; padding-left: 128px; text-align: center; font: 12px/17px "Noto Sans", "Noto Sans CJK SC", sans-serif; color: #a8abad; white-space: pre; pointer-events: none; }
.wins { margin-left: auto; display: flex; }
.wins svg { width: 10px; height: 10px; fill: none; stroke: #b8bcbe; stroke-width: 1.5; }
.light { gap: 18px; }
.dark { gap: 11px; padding-right: 11px; align-items: center; }
.dark svg { stroke: #222; }

.tabs { display: flex; height: 26px; background: #d9dadc; }
.tab { height: 26px; padding-bottom: 1px; }
.home { width: 70px; }
.tab.on { background: #fff; width: 96px; color: #333; }

/* ribbon */
.ribbon { display: flex; border-bottom: 2px solid #cfd3d3; background: #fff; padding-left: 3px; box-shadow: inset 0 -18px 0 #edf1f2; }
.group { display: flex; flex-direction: column; padding-top: 8px; }
.tools { display: flex; height: 65px; padding: 0 4px 0 6px; border-right: 1px solid #ccc; }
.tools button { width: 42px; display: block; text-align: center; white-space: nowrap; position: relative; align-self: start; }
.tools .w53 { width: 53px; }
.tools .w64 { width: 64px; }
.tools .w76 { width: 77px; }
.tools button.w76, .tools button.w53 { display: flex; flex-direction: column; align-items: center; }
.tools svg { width: 28px; height: 30px; margin: 1px auto 3px; }
.group h2 { font-size: 12px; line-height: 18px; height: 18px; margin-top: 10px; text-align: center; background: #edf1f2; color: #666; }
.group.rest { flex: 1; justify-content: end; }
.caret { display: block; width: 0; margin: 5px auto 0; border: 3px solid transparent; border-top: 4px solid #555; border-bottom: 0; }
.caret.beside { position: absolute; right: 4px; bottom: 6px; }
.caret.big { border-width: 5px; border-bottom: 0; border-top-color: #666; margin: 0; }

/* middle */
.work { flex: 1; display: flex; min-height: 0; }
.head { height: 35px; background: #f5f5f5; display: flex; align-items: center; padding-left: 4px; padding-right: 4px; }
.head h3 { font-size: 16px; line-height: 24px; margin-right: auto; }
.head button { margin-left: 8px; }
.head svg { width: 12px; height: 12px; fill: none; stroke: #666; stroke-width: 1.6; }
.browser { width: 303px; border-right: 3px solid #d8d8d8; display: flex; flex-direction: column; position: relative; }
.tree { list-style: none; flex: 1; margin-top: 1px; border: 1px solid #555; border-left-color: #777; background: #fff; color: #000; }
.tree li { height: 24px; display: flex; align-items: center; padding-left: 6px; padding-bottom: 1px; }
.tree .l1 { padding-left: 25px; }
.tree .l2 { padding-left: 44px; }
.tree svg { width: 16px; height: 16px; margin: 0 4px 0 6px; }
.tree b, .tree s { width: 9px; height: 9px; flex: none; }
.tree b { border: 1px solid #999; border-radius: 1px; background: linear-gradient(#3a5fb0, #3a5fb0) center / 5px 1px no-repeat #f0f0f0; }
.hint { position: absolute; left: 9px; bottom: 6px; font-size: 16px; line-height: 24px; color: #333; }

.canvas { flex: 1; min-width: 0; position: relative; background: #fff; }
.scene { width: 100%; height: 100%; position: absolute; inset: 0; }
.cube { font-size: 24px; fill: #999; text-anchor: middle; }
.modes { position: absolute; left: 374px; top: 2px; width: 326px; height: 33px; background: #f8f8f8; display: flex; align-items: center; gap: 11px; padding-left: 10px; color: #222; }
.modes legend { display: none; }
.modes span { width: 60px; margin-bottom: 4px; }
.modes label { display: flex; align-items: center; gap: 3px; white-space: nowrap; }
.modes input { appearance: none; width: 12px; height: 12px; border-radius: 50%; border: 1px solid #ddd; background: #fff; }
.modes input:checked { background: radial-gradient(#2b8a7e 3px, #fff 4px); }

/* truss panel */
.props { width: 303px; border-left: 3px solid #d0d0d0; background: #eee; display: flex; flex-direction: column; border-bottom: 1px solid #c8c8c8; }
.ptabs { display: flex; align-items: end; height: 27px; padding-left: 5px; border-top: 2px solid #ccc; color: #666; }
.ptabs button { height: 16px; line-height: 12px; border: 1px solid #ccc; border-left: 0; border-bottom: 0; padding: 0 5px 3px 6px; }
.ptabs .on { height: 19px; line-height: 16px; background: #fff; border-left: 1px solid #ccc; padding: 0 8px 2px; color: #000; }
.scroller { display: flex; margin-left: 7px; margin-right: 7px; border-top: 1px solid #666; border-left: 1px solid #555; height: 670px; overflow: hidden; }
.form { flex: 1; background: #fff; padding-top: 11px; color: #000; }
.thumb { width: 2px; height: 620px; background: #777; margin: 27px 4px 0 7px; }
.line { display: flex; align-items: start; }
.r1 { height: 21px; margin-bottom: 12px; padding-left: 29px; padding-right: 2px; justify-content: space-between; align-items: center; }
.r1 label, .len label { margin-bottom: 2px; }
.r1 .pick { width: 156px; height: 21px; }
.f { width: 35px; height: 23px; border: 1px solid #ddd; background: #fff; color: #777; padding: 0 0 3px 3px; font: 11px/17px "Noto Sans", "Noto Sans CJK SC", sans-serif; }
.f.cn { font-size: 12px; }
.f.dark { color: #444; }
.f.edit { color: #000; border-bottom-color: #777; }
.tri { padding-left: 71px; gap: 16px; align-items: center; }
.in80 { padding: 6px 0 0 140px; }
.in200 { padding: 9px 0 0 179px; }
.elevation { padding-left: 72px; }
.bars { display: grid; grid-template-columns: 32px 46px 65px 35px; row-gap: 9px; padding: 30px 0 16px 45px; align-items: center; }
.bars input:nth-child(4n+3) { width: 50px; }
.pos { margin-bottom: 4px; padding-left: 27px; }
.ref { padding-left: 37px; gap: 11px; }
.ref .f { margin-top: 37px; }
.mirror { padding: 1px 0 0 50px; align-items: center; }
.mirror input { appearance: none; width: 13px; height: 13px; border: 1px solid #666; border-radius: 3px; background: #f3f3f3; margin-right: 2px; }
.offt { padding: 2px 0 14px 32px; }
.off { padding-left: 37px; height: 40px; }
.off .f { width: 46px; margin-top: 8px; }
.len { margin-top: 20px; height: 21px; padding-left: 32px; padding-right: 25px; justify-content: space-between; align-items: center; }
.len .pick { width: 121px; height: 21px; }
.ends { display: flex; padding: 10px 0 0 29px; }
.ends div { display: grid; gap: 8px; align-content: start; }
.star { width: 21px; height: 23px; border: 1px solid #aaa; background: #fff; margin: 14px 0 0 3px; }
.star svg { width: 16px; height: 16px; margin: auto; }

/* command row */
.command { height: 31px; background: #e5e5e5; border-bottom: 1px solid #c8c8c8; display: flex; align-items: stretch; }
.entry { width: 615px; background: #fdfdfd; display: flex; align-items: center; padding-left: 4px; border-right: 1px solid #ccc; border-top: 1px solid #d5d5d5; }
.entry input { flex: 1; margin-left: 11px; padding-bottom: 2px; color: #888; }
.grip { width: 2px; height: 14px; background: repeating-linear-gradient(#999 0 2px, transparent 2px 4px); }
.up { width: 31px; background: #fff; }
.up svg { width: 10px; height: 6px; margin: auto; }
.strip { display: flex; align-items: center; background: #fff; padding: 0 3px 0 5px; gap: 2px; border-radius: 3px; }
.strip .grip { margin-right: 2px; }
.strip button, .status button { width: 24px; height: 24px; flex: none; }
.strip svg, .status svg { width: 18px; height: 20px; margin: auto; }
.strip .a, .status .a { background: #bfdbd6; border: 1px solid #3c9186; }
.sep { width: 1px; height: 16px; background: #bbb; margin: 0 3px 0 2px; flex: none; }

/* status row */
.status { height: 28px; background: #f0f0f0; border-bottom: 1px solid #b0b0b0; display: flex; align-items: center; gap: 2px; padding: 0 6px 0 4px; }
.status .sep { margin: 0 2px; }
.status .a { width: 20px; height: 20px; margin: 0 2px; }
.status svg { width: 18px; height: 18px; }
.sign { width: 24px; text-align: center; font-size: 16px; color: #888; }
.status input { appearance: none; width: 61px; height: 14px; background: linear-gradient(#999, #999) center / 100% 1px no-repeat; }
.status input::-webkit-slider-thumb { appearance: none; width: 5px; height: 14px; border: 1px solid #888; background: #ddd; }
output { margin: 0 auto; font: 12px/17px "Noto Sans", sans-serif; padding: 0 0 2px 18px; }
.snaps { display: flex; align-items: center; gap: 2px; }
.status .tiny { width: 8px; margin-right: 4px; }
.tiny svg { width: 8px; height: 5px; }
.desk { height: 8px; background: radial-gradient(circle at 38px 9px, #b03030 6px, transparent 7px), linear-gradient(90deg, #d9d9d9 45%, #ddd4d6 52%, #c9dae6 62%, #dde2e6 80%, #e0dcda); }

/* red callouts laid over the window */
.mark { position: absolute; border: 3px solid #ff3334; pointer-events: none; }
.m1 { left: 1061px; top: 57px; width: 64px; height: 83px; }
.m2 { left: 667px; top: 161px; width: 346px; height: 41px; }
.m3 { left: 4px; top: 904px; width: 280px; height: 60px; }
.m4 { left: 1374px; top: 160px; width: 307px; height: 789px; }
```
